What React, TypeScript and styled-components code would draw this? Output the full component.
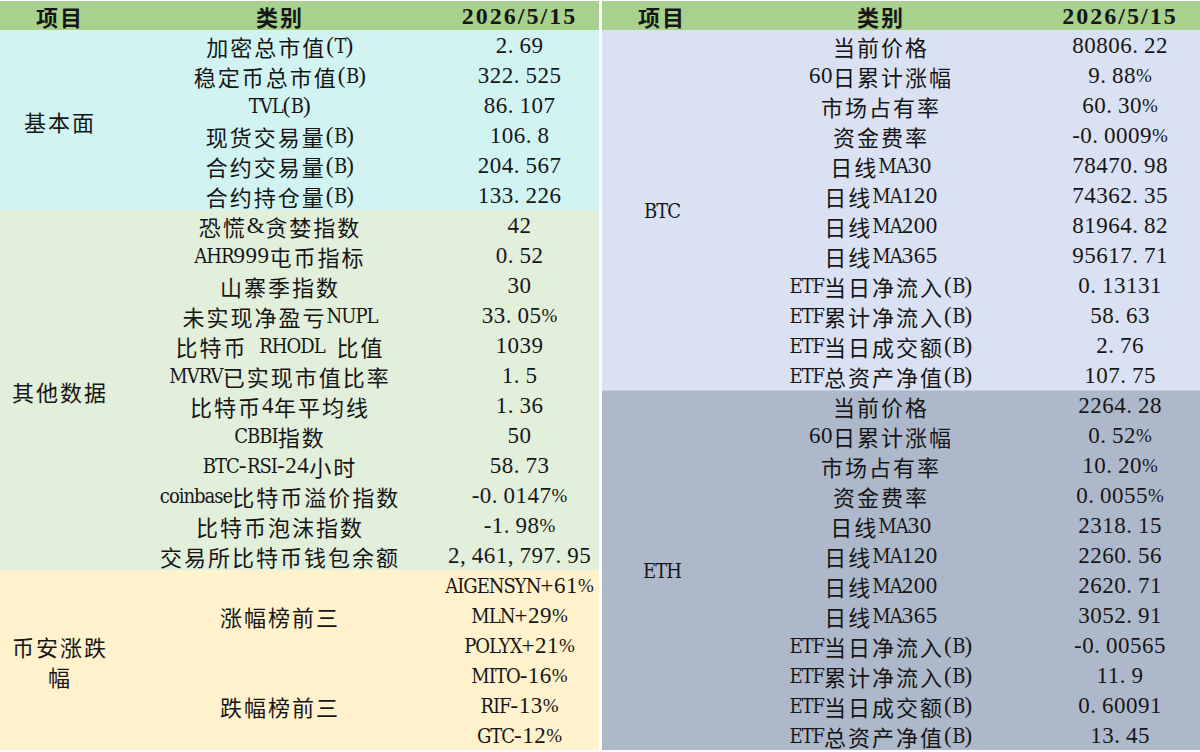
import React from "react";
import styled, { createGlobalStyle } from "styled-components";

const GlobalStyle = createGlobalStyle`
  html, body { margin: 0; padding: 0; background: #ffffff; }
  body { width: 1200px; height: 752px; overflow: hidden; }
`;

const C = {
  header: "#a9d18e",
  cyan: "#d1f4f3",
  green: "#e2efda",
  yellow: "#fff2cc",
  blue: "#d9e1f2",
  slate: "#adb9ca",
  text: "#161616",
};

const Page = styled.div`
  display: flex;
  gap: 3px;
  padding-top: 1px;
  width: 1200px;
`;

const Table = styled.div<{ $w: number }>`
  width: ${(p) => p.$w}px;
  display: flex;
  flex-direction: column;
  color: ${C.text};
  font-family: "Noto Sans CJK SC", "Noto Sans CJK JP", sans-serif;
  font-size: 22px;
  line-height: 26px;
`;

const HeaderRow = styled.div<{ $mid: number }>`
  display: grid;
  grid-template-columns: 120px ${(p) => p.$mid}px 1fr;
  height: 29px;
  background: ${C.header};
  font-weight: 700;
`;

const Cell = styled.div<{ $head?: boolean }>`
  display: flex;
  align-items: center;
  justify-content: center;
  text-align: center;
  white-space: nowrap;
  box-sizing: border-box;
  padding-top: ${(p) => (p.$head ? 0 : 2)}px;
`;

const Section = styled.div<{ $bg: string; $line?: boolean }>`
  display: flex;
  background: ${(p) => p.$bg};
  box-shadow: ${(p) => (p.$line ? "inset 0 1px 0 #c4cedc" : "none")};
`;

const GroupCell = styled.div`
  width: 120px;
  flex: none;
  display: flex;
  align-items: center;
  justify-content: center;
  text-align: center;
  padding: 2px 8px 0;
  box-sizing: border-box;
  line-height: 30px;
`;

const Rows = styled.div`
  flex: 1;
  display: flex;
  flex-direction: column;
`;

const Row = styled.div<{ $mid: number }>`
  display: grid;
  grid-template-columns: ${(p) => p.$mid}px 1fr;
  height: 30px;
`;

const SubGroup = styled.div<{ $mid: number }>`
  display: grid;
  grid-template-columns: ${(p) => p.$mid}px 1fr;
`;

const Values = styled.div`
  display: flex;
  flex-direction: column;
`;

const ValueCell = styled(Cell)`
  height: 30px;
`;

const Han = styled.span`
  letter-spacing: 2px;
`;

type Kind = "d" | "p" | "r";

const spacing: Record<Kind, number> = { d: 0.5, p: 6, r: 0 };

const Num = styled.span<{ $head?: boolean; $kind: Kind }>`
  font-family: "Liberation Serif", "Times New Roman", serif;
  font-size: ${(p) => (p.$head ? 24 : p.$kind === "r" ? 19 : 23)}px;
  letter-spacing: ${(p) => (p.$head ? 2 : spacing[p.$kind])}px;
  line-height: 14px;
  vertical-align: ${(p) => (p.$head ? 0 : -3)}px;
  white-space: pre;
`;

const Letters = styled.span`
  font-family: "DejaVu Serif Condensed", "Liberation Mono", monospace;
  font-size: 20px;
  letter-spacing: -1px;
  line-height: 14px;
  vertical-align: -3px;
  white-space: pre;
`;

const CJK_RE = /([\u2E80-\u9FFF\u3000-\u303F\uFF00-\uFFEF]+)/;
const ALPHA_RE = /([A-Za-z]+)/;

function kindOf(ch: string): Kind {
  if (/[., ]/.test(ch)) return "p";
  if (ch === "%") return "r";
  return "d";
}

function splitKinds(s: string): { kind: Kind; text: string }[] {
  const res: { kind: Kind; text: string }[] = [];
  for (const ch of s) {
    const k = kindOf(ch);
    const last = res[res.length - 1];
    if (last && last.kind === k) last.text += ch;
    else res.push({ kind: k, text: ch });
  }
  return res;
}

function T({ s, head }: { s: string; head?: boolean }) {
  const out: React.ReactNode[] = [];
  s.split(CJK_RE)
    .filter((p) => p.length > 0)
    .forEach((p, i) => {
      if (CJK_RE.test(p)) {
        out.push(<Han key={i}>{p}</Han>);
        return;
      }
      p.split(ALPHA_RE)
        .filter((q) => q.length > 0)
        .forEach((q, j) => {
          if (ALPHA_RE.test(q)) {
            out.push(<Letters key={`${i}-${j}`}>{q}</Letters>);
            return;
          }
          splitKinds(q).forEach((r, n) => {
            out.push(
              <Num key={`${i}-${j}-${n}`} $head={head} $kind={r.kind}>
                {r.text}
              </Num>
            );
          });
        });
    });
  return <>{out}</>;
}

type Item = [string, string];

const basics: Item[] = [
  ["加密总市值(T)", "2.69"],
  ["稳定币总市值(B)", "322.525"],
  ["TVL(B)", "86.107"],
  ["现货交易量(B)", "106.8"],
  ["合约交易量(B)", "204.567"],
  ["合约持仓量(B)", "133.226"],
];

const others: Item[] = [
  ["恐慌&贪婪指数", "42"],
  ["AHR999屯币指标", "0.52"],
  ["山寨季指数", "30"],
  ["未实现净盈亏NUPL", "33.05%"],
  ["比特币 RHODL 比值", "1039"],
  ["MVRV已实现市值比率", "1.5"],
  ["比特币4年平均线", "1.36"],
  ["CBBI指数", "50"],
  ["BTC-RSI-24小时", "58.73"],
  ["coinbase比特币溢价指数", "-0.0147%"],
  ["比特币泡沫指数", "-1.98%"],
  ["交易所比特币钱包余额", "2,461,797.95"],
];

const movers: { label: string; values: string[] }[] = [
  { label: "涨幅榜前三", values: ["AIGENSYN+61%", "MLN+29%", "POLYX+21%"] },
  { label: "跌幅榜前三", values: ["MITO-16%", "RIF-13%", "GTC-12%"] },
];

const btc: Item[] = [
  ["当前价格", "80806.22"],
  ["60日累计涨幅", "9.88%"],
  ["市场占有率", "60.30%"],
  ["资金费率", "-0.0009%"],
  ["日线MA30", "78470.98"],
  ["日线MA120", "74362.35"],
  ["日线MA200", "81964.82"],
  ["日线MA365", "95617.71"],
  ["ETF当日净流入(B)", "0.13131"],
  ["ETF累计净流入(B)", "58.63"],
  ["ETF当日成交额(B)", "2.76"],
  ["ETF总资产净值(B)", "107.75"],
];

const eth: Item[] = [
  ["当前价格", "2264.28"],
  ["60日累计涨幅", "0.52%"],
  ["市场占有率", "10.20%"],
  ["资金费率", "0.0055%"],
  ["日线MA30", "2318.15"],
  ["日线MA120", "2260.56"],
  ["日线MA200", "2620.71"],
  ["日线MA365", "3052.91"],
  ["ETF当日净流入(B)", "-0.00565"],
  ["ETF累计净流入(B)", "11.9"],
  ["ETF当日成交额(B)", "0.60091"],
  ["ETF总资产净值(B)", "13.45"],
];

function Header({ mid }: { mid: number }) {
  return (
    <HeaderRow $mid={mid}>
      <Cell $head><T s="项目" head /></Cell>
      <Cell $head><T s="类别" head /></Cell>
      <Cell $head><T s="2026/5/15" head /></Cell>
    </HeaderRow>
  );
}

function Group({
  label,
  items,
  bg,
  mid,
  line,
}: {
  label: string;
  items: Item[];
  bg: string;
  mid: number;
  line?: boolean;
}) {
  return (
    <Section $bg={bg} $line={line}>
      <GroupCell><T s={label} /></GroupCell>
      <Rows>
        {items.map(([k, v]) => (
          <Row key={k} $mid={mid}>
            <Cell><T s={k} /></Cell>
            <Cell><T s={v} /></Cell>
          </Row>
        ))}
      </Rows>
    </Section>
  );
}

export default function App() {
  return (
    <>
      <GlobalStyle />
      <Page>
        <Table $w={599}>
          <Header mid={320} />
          <Group label="基本面" items={basics} bg={C.cyan} mid={320} />
          <Group label="其他数据" items={others} bg={C.green} mid={320} />
          <Section $bg={C.yellow}>
            <GroupCell><T s="币安涨跌幅" /></GroupCell>
            <Rows>
              {movers.map((m) => (
                <SubGroup key={m.label} $mid={320}>
                  <Cell><T s={m.label} /></Cell>
                  <Values>
                    {m.values.map((v) => (
                      <ValueCell key={v}><T s={v} /></ValueCell>
                    ))}
                  </Values>
                </SubGroup>
              ))}
            </Rows>
          </Section>
        </Table>
        <Table $w={598}>
          <Header mid={318} />
          <Group label="BTC" items={btc} bg={C.blue} mid={318} />
          <Group label="ETH" items={eth} bg={C.slate} mid={318} line />
        </Table>
      </Page>
    </>
  );
}
